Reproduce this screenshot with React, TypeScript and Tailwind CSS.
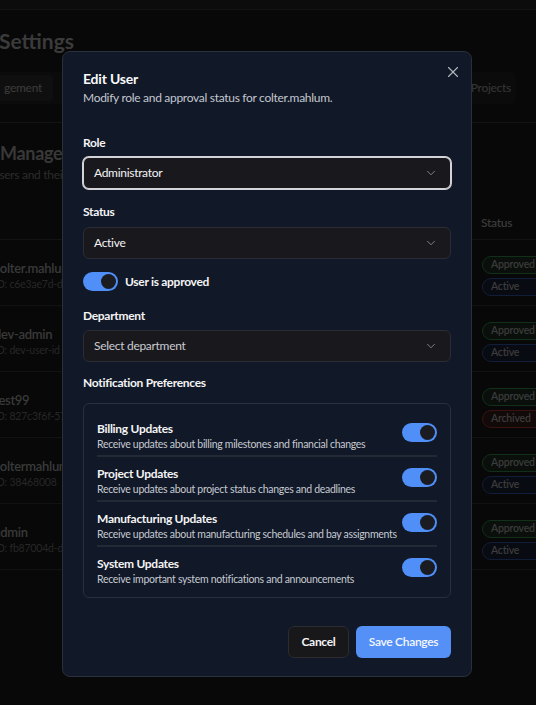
import { X, ChevronDown } from "lucide-react";

const users = [
  { name: "colter.mahlum", id: "ID: c6e3ae7d-d1f4-4b0e", status: "Active" },
  { name: "dev-admin", id: "ID: dev-user-id", status: "Active" },
  { name: "test99", id: "ID: 827c3f6f-574a-4c1d", status: "Archived" },
  { name: "coltermahlum", id: "ID: 38468008", status: "Active" },
  { name: "admin", id: "ID: fb87004d-d2a1-4e0b", status: "Active" },
];

const prefs = [
  { title: "Billing Updates", desc: "Receive updates about billing milestones and financial changes" },
  { title: "Project Updates", desc: "Receive updates about project status changes and deadlines" },
  { title: "Manufacturing Updates", desc: "Receive updates about manufacturing schedules and bay assignments" },
  { title: "System Updates", desc: "Receive important system notifications and announcements" },
];

function Toggle() {
  return (
    <div className="flex h-[19px] w-[35px] shrink-0 items-center justify-end rounded-full bg-[#4f8ff7] px-[2px]">
      <div className="h-[15px] w-[15px] rounded-full bg-[#1b1c22]" />
    </div>
  );
}

function Select({ value, muted, focused }: { value: string; muted?: boolean; focused?: boolean }) {
  return (
    <div
      className={
        focused
          ? "flex h-8 items-center justify-between rounded-md border border-[#d4d4d8] bg-[#19191d] pl-[10px] pr-[12px] ring-1 ring-[#d4d4d8]"
          : "flex h-8 items-center justify-between rounded-md border border-[#2a2d35] bg-[#19191d] pl-[10px] pr-[12px]"
      }
    >
      <span
        className={
          muted
            ? "text-[12px] tracking-[-0.3px] text-[#c9cbd1]"
            : "text-[12px] tracking-[-0.3px] text-[#f4f4f5]"
        }
      >
        {value}
      </span>
      <ChevronDown className="h-3.5 w-3.5 text-[#8b8e96]" strokeWidth={1.5} />
    </div>
  );
}

function Badge({ label }: { label: string }) {
  const tone =
    label === "Approved"
      ? "border-[#10301a] bg-[#0a0f0b]"
      : label === "Archived"
        ? "border-[#3a1212] bg-[#120909]"
        : "border-[#111d3a] bg-[#090b12]";
  return (
    <div
      className={`flex h-[18px] w-[70px] items-center rounded-full border px-[8px] text-[10.5px] font-semibold tracking-[-0.2px] text-[#3c3c3c] ${tone}`}
    >
      {label}
    </div>
  );
}

function Background() {
  return (
    <div className="flex h-full flex-col">
      <div className="h-[10px] border-b border-[#131313] bg-[#0c0c0c]" />
      <div className="mt-[17px] -ml-[1px] text-[21px] leading-[28px] font-bold text-[#3b3b3b]">Settings</div>
      <div className="mt-[17px] -ml-[10px] flex h-[32px] w-[526px] items-center justify-between rounded-md bg-[#0b0b0b] p-[3px] pr-[5px]">
        <div className="flex h-[26px] w-[60px] items-center justify-end rounded bg-[#0f0f0f] pr-[11px] text-[12px] font-medium tracking-[-0.3px] text-[#3a3a3a]">
          gement
        </div>
        <div className="text-[12px] font-medium tracking-[-0.3px] text-[#343434]">Projects</div>
      </div>
      <div className="mt-[18px] border-t border-[#131313]" />
      <div className="mt-[16px] text-[18px] leading-[28px] font-bold tracking-[-0.3px] text-[#383838]">Management</div>
      <div className="-ml-[7px] text-[12px] leading-[16px] tracking-[-0.3px] text-[#2c2c2c]">
        users and their permissions
      </div>
      <div className="mt-[15px] flex h-[42px] shrink-0 items-center border-b border-[#131313] pt-[8px]">
        <div className="w-[481px] shrink-0" />
        <div className="text-[12px] font-semibold tracking-[-0.3px] text-[#3a3a3a]">Status</div>
      </div>
      {users.map((u) => (
        <div key={u.name} className="flex h-[66px] shrink-0 items-center border-b border-[#121212] pt-[6px]">
          <div className="-ml-[6px] flex w-[488px] shrink-0 flex-col">
            <div className="text-[13px] leading-[17px] font-semibold tracking-[-0.3px] text-[#3a3a3a]">{u.name}</div>
            <div className="text-[10.5px] leading-[14px] tracking-[-0.2px] text-[#272727]">{u.id}</div>
          </div>
          <div className="flex shrink-0 flex-col gap-[4px]">
            <Badge label="Approved" />
            <Badge label={u.status} />
          </div>
        </div>
      ))}
    </div>
  );
}

export default function App() {
  return (
    <div className="relative h-[705px] w-[536px] overflow-hidden bg-[#080808] font-[Lato,sans-serif]">
      <Background />

      <div className="absolute left-[62px] top-[51px] w-[410px] rounded-lg border border-[#2a303b] bg-[#111827] px-5 pt-[17px] pb-[18px]">
        <button className="absolute right-[9px] top-[11px] text-[#b4b8c0]">
          <X size={18} strokeWidth={1.5} />
        </button>

        <div className="text-[14px] leading-[20px] font-bold tracking-[-0.2px] text-[#f8fafc]">Edit User</div>
        <div className="mt-[1px] text-[12px] leading-[16px] tracking-[-0.3px] text-[#c3c7cf]">
          Modify role and approval status for colter.mahlum.
        </div>

        <div className="mt-[29px] text-[12px] leading-[16px] font-bold tracking-[-0.3px] text-[#f4f4f5]">Role</div>
        <div className="mt-[6px]">
          <Select value="Administrator" focused />
        </div>

        <div className="mt-[15px] text-[12px] leading-[16px] font-bold tracking-[-0.3px] text-[#f4f4f5]">Status</div>
        <div className="mt-[7px]">
          <Select value="Active" />
        </div>

        <div className="mt-[13px] flex items-center gap-[7px]">
          <Toggle />
          <span className="text-[12px] font-bold tracking-[-0.3px] text-[#f4f4f5]">User is approved</span>
        </div>

        <div className="mt-[17px] text-[12px] leading-[16px] font-bold tracking-[-0.3px] text-[#f4f4f5]">Department</div>
        <div className="mt-[6px]">
          <Select value="Select department" muted />
        </div>

        <div className="mt-[13px] text-[12px] leading-[16px] font-bold tracking-[-0.3px] text-[#f4f4f5]">
          Notification Preferences
        </div>

        <div className="mt-[12px] rounded-md border border-[#2a303b] px-[13px] py-[7px]">
          {prefs.map((p, i) => (
            <div
              key={p.title}
              className={
                i === 0
                  ? "flex items-start justify-between border-b-2 border-[#232a36] pt-[10px] pb-[4px]"
                  : i < prefs.length - 1
                    ? "flex items-start justify-between border-b-2 border-[#232a36] pt-[9px] pb-[4px]"
                    : "flex items-start justify-between pt-[9px] pb-[4px]"
              }
            >
              <div className="flex flex-col">
                <div className="text-[12px] leading-[16px] font-bold tracking-[-0.3px] text-[#f4f4f5]">{p.title}</div>
                <div className="text-[10.5px] leading-[14px] tracking-[-0.3px] text-[#c6cad2]">{p.desc}</div>
              </div>
              <div className="mt-[2px]">
                <Toggle />
              </div>
            </div>
          ))}
        </div>

        <div className="mt-[28px] flex justify-end gap-[7px]">
          <button className="h-8 w-[61px] rounded-md border border-[#2b2b30] bg-[#18181b] text-[12px] font-bold tracking-[-0.3px] text-[#f4f4f5]">
            Cancel
          </button>
          <button className="h-8 w-[95px] rounded-md bg-[#5490f6] text-[12px] font-semibold tracking-[-0.3px] text-[#f5f8ff]">
            Save Changes
          </button>
        </div>
      </div>
    </div>
  );
}
